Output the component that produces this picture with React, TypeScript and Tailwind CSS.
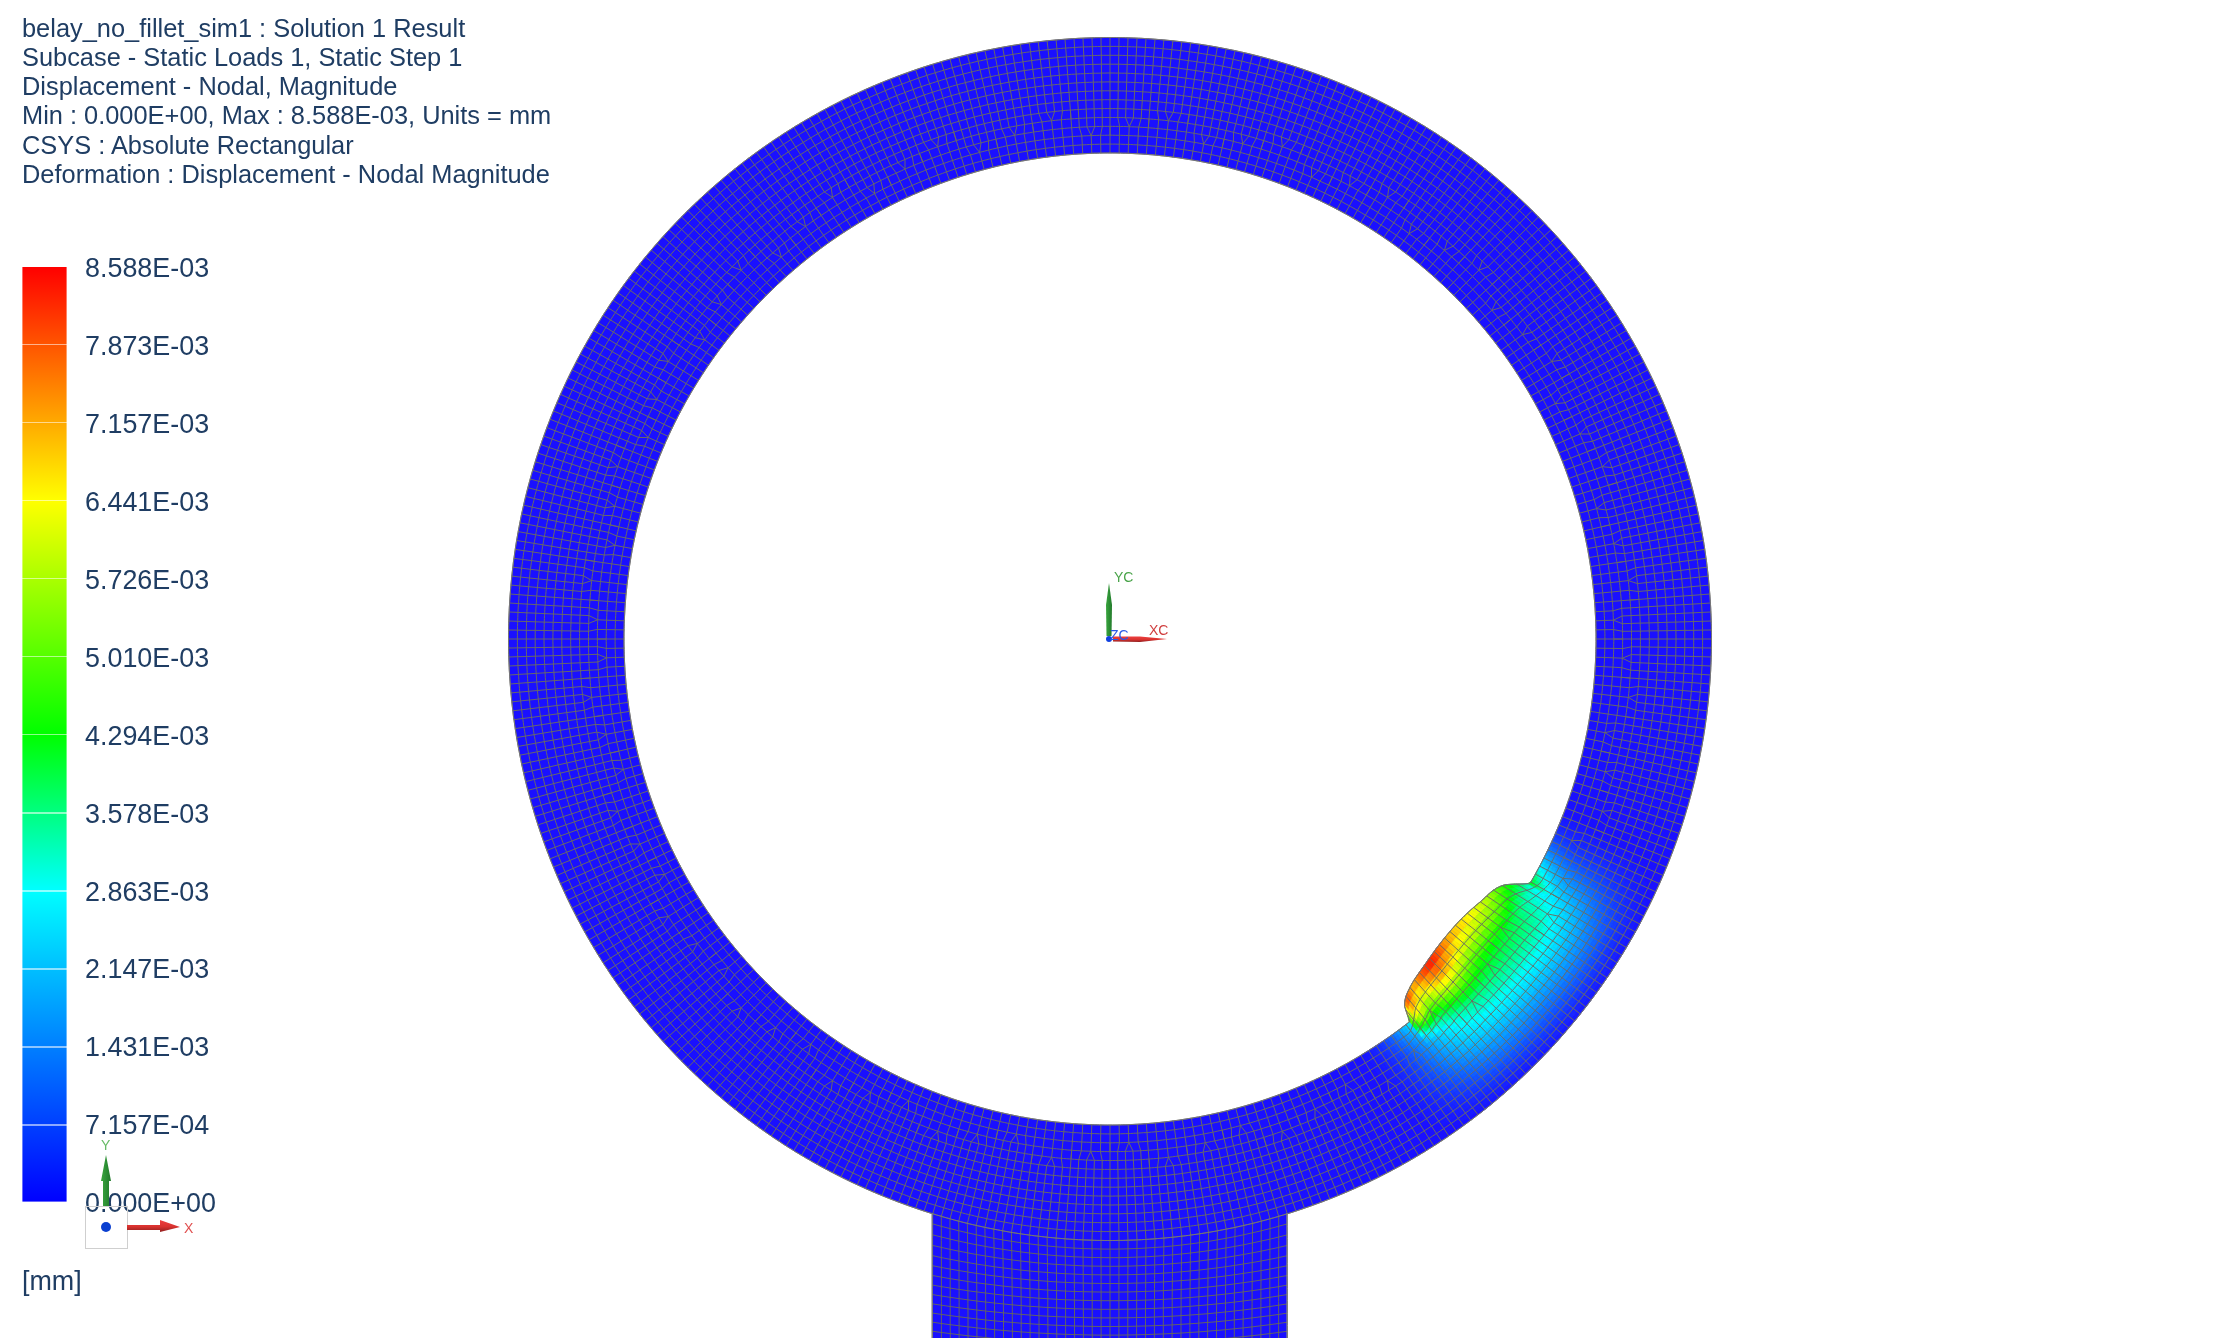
import React from "react";

const CX = 1110, CY = 639, RO = 601.5, RI = 486;
const ROWS = 13, BLOCKS = 84;
const rad = (d: number) => (d * Math.PI) / 180;

const D0: [number, number][] = [[30.2,0],[32.2,23],[35.4,32],[38.8,37],[42.6,37],[46.3,32.6],[49.2,26.5],[51.2,16],[51.9,0]];
function table(t: [number, number][], x: number, clampEnds = false) {
  if (x <= t[0][0]) return clampEnds ? t[0][1] : 0;
  if (x >= t[t.length - 1][0]) return clampEnds ? t[t.length - 1][1] : 0;
  for (let i = 1; i < t.length; i++) if (x <= t[i][0]) {
    const a = t[i - 1], b = t[i];
    const u = (x - a[0]) / (b[0] - a[0]);
    const p0 = i > 1 ? t[i - 2] : a;
    const p3 = i + 1 < t.length ? t[i + 1] : b;
    const m1 = ((b[1] - p0[1]) / (b[0] - p0[0])) * (b[0] - a[0]);
    const m2 = ((p3[1] - a[1]) / (p3[0] - a[0])) * (b[0] - a[0]);
    const u2 = u * u, u3 = u2 * u;
    return (2 * u3 - 3 * u2 + 1) * a[1] + (u3 - 2 * u2 + u) * m1 + (-2 * u3 + 3 * u2) * b[1] + (u3 - u2) * m2;
  }
  return 0;
}
function disp(deg: number, r: number) {
  if (deg < 15 || deg > 70) return 0;
  const s = (r - RI) / (RO - RI);
  const w = (r - RI) * 0.1;
  let sum = 0;
  for (let k = -2; k <= 2; k++) sum += Math.max(0, table(D0, deg + (k * w) / 2));
  return (sum / 5) * Math.exp(-(r - RI) / 40) * (1 - s);
}
function pt(deg: number, r: number): [number, number] {
  const R = r - disp(deg, r);
  return [CX + R * Math.cos(rad(deg)), CY + R * Math.sin(rad(deg))];
}
const f1 = (n: number) => n.toFixed(1);
const P = (p: [number, number]) => `${f1(p[0])} ${f1(p[1])}`;

function rowR(i: number) { return RI + ((RO - RI) * i) / ROWS; }

function meshPath() {
  let d = "";
  const step = 0.3;
  for (let i = 0; i <= ROWS; i++) {
    const r = rowR(i);
    d += `M${P(pt(0, r))}`;
    for (let a = step; a <= 360.001; a += step) d += `L${P(pt(a, r))}`;
  }
  const blockDeg = 360 / BLOCKS;
  for (let b = 0; b < BLOCKS; b++) {
    const a0 = b * blockDeg;
    const tr = 2 + (b % 3 === 0 ? 1 : b % 3 === 1 ? 2 : 0);
    const rA = rowR(tr), rB = rowR(tr + 1);
    for (let k = 0; k < 4; k++) {
      const a = a0 + (k * blockDeg) / 4;
      d += `M${P(pt(a, RI))}`;
      for (let i = 1; i <= tr; i++) d += `L${P(pt(a, rowR(i)))}`;
    }
    for (let k = 0; k < 5; k++) {
      const a = a0 + (k * blockDeg) / 5;
      d += `M${P(pt(a, rB))}`;
      for (let i = tr + 2; i <= ROWS; i++) d += `L${P(pt(a, rowR(i)))}`;
    }
    for (let k = 0; k <= 4; k++) {
      const ai = a0 + (k * blockDeg) / 4;
      if (k <= 2) d += `M${P(pt(ai, rA))}L${P(pt(a0 + (k * blockDeg) / 5, rB))}`;
      if (k >= 2) d += `M${P(pt(ai, rA))}L${P(pt(a0 + ((k + 1) * blockDeg) / 5, rB))}`;
    }
  }
  return d;
}

function stemMesh() {
  let d = "";
  const X0 = 932, X1 = 1287, HALF = 177.5;
  const topOf = (x: number) => CY + Math.sqrt(RO * RO - (x - CX) * (x - CX));
  const rowY = (k: number, x: number) => {
    const sag = 10 + 18 * Math.exp(-k / 6);
    const u = (x - CX) / HALF;
    return CY + RO + k * 8.6 - sag * u * u;
  };
  for (let k = 1; k <= 14; k++) {
    d += `M${X0} ${f1(rowY(k, X0))}`;
    for (let x = X0 + 8; x <= X1; x += 8) d += `L${f1(x)} ${f1(rowY(k, x))}`;
    d += `L${X1} ${f1(rowY(k, X1))}`;
  }
  const stepDeg = 360 / (BLOCKS * 5);
  for (let k = -20; k <= 20; k++) {
    const xTop = CX + RO * Math.sin(rad(k * stepDeg));
    const xBot = CX + k * 8.875;
    const yT = topOf(xTop);
    d += `M${f1(xTop)} ${f1(yT)}`;
    for (let t = 0.1; t <= 1.001; t += 0.1) {
      const y = yT + (1338 - yT) * t;
      const x = xTop + (xBot - xTop) * (1 - (1 - t) * (1 - t));
      d += `L${f1(x)} ${f1(y)}`;
    }
  }
  return d;
}

const STOPS: [number, [number, number, number]][] = [
  [0, [26, 16, 255]],
  [0.3333, [0, 255, 255]],
  [0.5, [0, 255, 0]],
  [0.75, [255, 255, 0]],
  [1, [255, 0, 0]],
];
function colour(v: number) {
  v = Math.max(0, Math.min(1, v));
  for (let i = 1; i < STOPS.length; i++) if (v <= STOPS[i][0]) {
    const [a, ca] = STOPS[i - 1], [b, cb] = STOPS[i];
    const t = (v - a) / (b - a);
    const m = [0, 1, 2].map((j) => Math.round(ca[j] + (cb[j] - ca[j]) * t));
    return `rgb(${m[0]},${m[1]},${m[2]})`;
  }
  return "rgb(255,0,0)";
}
function smooth(e0: number, e1: number, x: number) {
  const t = Math.max(0, Math.min(1, (x - e0) / (e1 - e0)));
  return t * t * (3 - 2 * t);
}
const H: [number, number][] = [[440,1.02],[450,1],[467,0.87],[482,0.72],[498,0.55],[513,0.42],[540,0.3],[567,0.16],[590,0.05],[602,0.01]];
const ME: [number, number][] = [[29,0.5],[32,0.6],[35,0.72],[39,0.79],[41.5,0.84],[43.6,0.93],[45.3,1],[47,0.97],[49,0.91],[51,1.04],[53,0.5]];
function field(deg: number, r: number) {
  const R = r - disp(deg, r);
  const h = table(H, R, true);
  const md = Math.exp(-Math.pow((deg - 40) / 13, 4));
  const inBulge = deg >= 30.2 && deg <= 52;
  const me = inBulge ? table(ME, deg, true) : md;
  const t = smooth(486, 520, R);
  return h * (me * (1 - t) + md * t);
}

function Hot() {
  const polys: React.ReactElement[] = [];
  const da = 0.4, dr = 4;
  for (let a = 18; a < 66; a += da) {
    for (let r = RI; r < RO - 0.01; r += dr) {
      const r2 = Math.min(RO, r + dr);
      const v = field(a + da / 2, r + dr / 2);
      if (v < 0.008) continue;
      const col = colour(v);
      const p = [pt(a, r), pt(a + da, r), pt(a + da, r2), pt(a, r2)].map(P).join(" ");
      polys.push(<polygon key={`${a}-${r}`} points={p} fill={col} stroke={col} strokeWidth={0.7} />);
    }
  }
  return <g>{polys}</g>;
}

function ringShape() {
  let d = "";
  for (let a = 0; a <= 360; a += 0.25) d += `${a === 0 ? "M" : "L"}${P(pt(a, RO))}`;
  d += "Z";
  for (let a = 360; a >= 0; a -= 0.25) d += `${a === 360 ? "M" : "L"}${P(pt(a, RI))}`;
  return d + "Z";
}

const HEADER = [
  "belay_no_fillet_sim1 : Solution 1 Result",
  "Subcase - Static Loads 1, Static Step 1",
  "Displacement - Nodal, Magnitude",
  "Min : 0.000E+00, Max : 8.588E-03, Units = mm",
  "CSYS : Absolute Rectangular",
  "Deformation : Displacement - Nodal Magnitude",
];
const LABELS = ["8.588E-03","7.873E-03","7.157E-03","6.441E-03","5.726E-03","5.010E-03","4.294E-03","3.578E-03","2.863E-03","2.147E-03","1.431E-03","7.157E-04","0.000E+00"];

export default function App() {
  const mesh = meshPath();
  const stem = stemMesh();
  const ring = ringShape();
  return (
    <div className="relative h-[1338px] w-[2217px] overflow-hidden bg-white font-['Liberation_Sans',Arial,sans-serif] text-[#1f3d63]">
      <svg className="absolute inset-0 blur-[0.35px]" width={2217} height={1338} viewBox="0 0 2217 1338">
        <defs>
          <linearGradient id="redshaft" x1="0" y1="0" x2="0" y2="1">
            <stop offset="0" stopColor="#ee4040" />
            <stop offset="0.55" stopColor="#d9322f" />
            <stop offset="1" stopColor="#8f1f1f" />
          </linearGradient>
          <linearGradient id="greenshaft" x1="0" y1="0" x2="1" y2="0">
            <stop offset="0" stopColor="#3aa63f" />
            <stop offset="1" stopColor="#217a2a" />
          </linearGradient>
        </defs>
        <rect x={932} y={1200} width={355} height={138} fill="#1a10ff" />
        <path d={ring} fill="#1a10ff" fillRule="evenodd" />
        <Hot />
        <path d={mesh} fill="none" stroke="#6c6c62" strokeWidth={0.95} />
        <path d={stem} fill="none" stroke="#66665e" strokeWidth={0.95} />
        <path d="M932 1213V1338M1287 1213V1338" stroke="#8a8a8a" strokeWidth={1.2} fill="none" />
        <path d={ring} fill="none" stroke="#77777a" strokeWidth={0.9} />
        <path d="M1109 583L1112 605L1111.5 636H1106.5L1106 605Z" fill="url(#greenshaft)" />
        <path d="M1113 636.5L1140 636.5L1167 639L1140 642L1113 641.5Z" fill="url(#redshaft)" />
        <circle cx={1109} cy={639} r={3} fill="#1040e0" />
        <text x={1114} y={582} fontSize={14} fill="#4aa44a" fontFamily="Liberation Sans">YC</text>
        <text x={1149} y={635} fontSize={14} fill="#d04040" fontFamily="Liberation Sans">XC</text>
        <text x={1110} y={640} fontSize={14} fill="#2a5ae8" fontFamily="Liberation Sans">ZC</text>
      </svg>

      <div className="relative flex h-full flex-col pl-[22px] blur-[0.35px]">
        <div className="mt-[13.5px] text-[25.4px] leading-[29.3px] whitespace-nowrap">
          {HEADER.map((l) => (
            <div key={l}>{l}</div>
          ))}
        </div>
        <div className="mt-[78px] flex h-[935px] items-stretch">
          <div className="w-[44.5px] bg-[linear-gradient(to_bottom,#ff0000_0%,#ffff00_25%,#00ff00_50%,#00ffff_66.67%,#0000ff_100%)] shadow-[inset_1px_0_0_rgba(255,255,255,0.4),inset_-1px_0_0_rgba(255,255,255,0.4),inset_0_-1px_0_rgba(255,255,255,0.4)]">
            <div className="flex h-full flex-col justify-evenly">
              {Array.from({ length: 11 }).map((_, i) => (
                <div key={i} className="h-[1.5px] bg-white/55" />
              ))}
            </div>
          </div>
          <div className="ml-[18.5px] -mt-[15px] -mb-[17px] flex flex-col justify-between text-[26.9px] leading-[32px]">
            {LABELS.map((l) => (
              <div key={l}>{l}</div>
            ))}
          </div>
        </div>
        <div className="mt-[64px] text-[26.9px] leading-[30px]">[mm]</div>
      </div>

      <div className="absolute left-[85px] top-[1206px] h-[43px] w-[43px] border border-[#cfcfcf]">
        <div className="absolute left-[15px] top-[15px] h-[10px] w-[10px] rounded-full bg-[#0a3fd0]" />
      </div>
      <svg className="absolute left-[90px] top-[1133px] blur-[0.35px]" width={110} height={110} viewBox="0 0 110 110">
        <defs>
          <linearGradient id="redarrow" x1="0" y1="0" x2="0" y2="1">
            <stop offset="0" stopColor="#ee4040" />
            <stop offset="0.55" stopColor="#d9322f" />
            <stop offset="1" stopColor="#8f1f1f" />
          </linearGradient>
          <linearGradient id="greenarrow" x1="0" y1="0" x2="1" y2="0">
            <stop offset="0" stopColor="#3aa63f" />
            <stop offset="1" stopColor="#217a2a" />
          </linearGradient>
        </defs>
        <text x={11} y={17} fontSize={14} fill="#66bb66" fontFamily="Liberation Sans">Y</text>
        <path d="M16 22L21 48H19V73H13V48H11Z" fill="url(#greenarrow)" />
        <path d="M37 92H70V87L90 94L70 99V97H37Z" fill="url(#redarrow)" />
        <text x={94} y={100} fontSize={14} fill="#e05050" fontFamily="Liberation Sans">X</text>
      </svg>
    </div>
  );
}
